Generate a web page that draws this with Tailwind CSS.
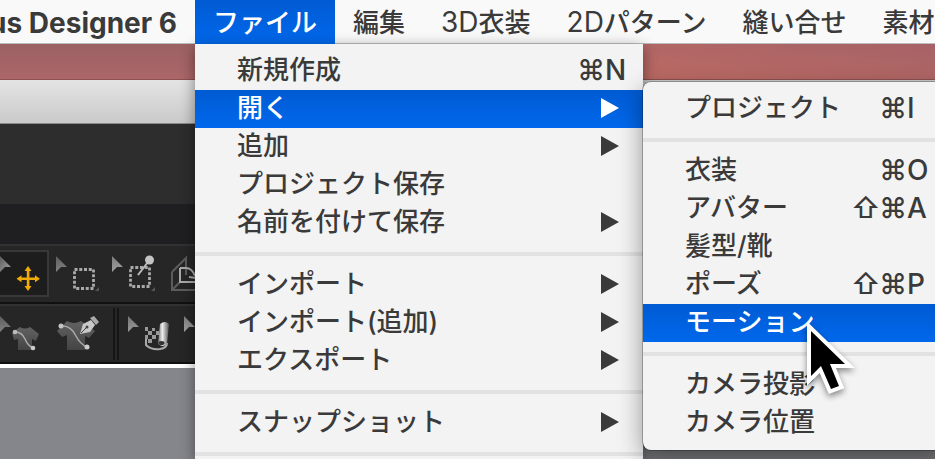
<!DOCTYPE html>
<html lang="ja">
<head>
  <meta charset="UTF-8">
  <meta name="viewport" content="width=device-width, initial-scale=1.0">
  <title>Designer 6</title>
  <script src="https://cdn.jsdelivr.net/npm/@tailwindcss/browser@4"></script>
</head>
<body class="relative flex h-screen flex-col overflow-hidden bg-[#85868b] font-['Inter','Noto_Sans_CJK_JP',sans-serif] text-[26px] leading-[38px] font-medium text-[#3a3a3a]">

  <!-- Menu bar -->
  <nav class="flex h-11 shrink-0 border-b border-[#bdbdbd] bg-[#f9f9f9] whitespace-nowrap">
    <div class="flex w-[195px] shrink-0 items-center justify-end overflow-hidden pt-0.5 pr-[18px] text-[28px] font-bold">us Designer 6</div>
    <button class="-mb-px h-11 shrink-0 bg-linear-to-b from-[#005bd3] to-[#0068ec] px-[18px] pt-0.5 text-white">ファイル</button>
    <button class="shrink-0 px-[18px] pt-0.5">編集</button>
    <button class="shrink-0 px-[18px] pt-0.5"><span class="text-[28px] font-normal">3D</span>衣装</button>
    <button class="shrink-0 px-[18px] pt-0.5"><span class="text-[28px] font-normal">2D</span>パターン</button>
    <button class="shrink-0 px-[18px] pt-0.5">縫い合せ</button>
    <button class="shrink-0 px-[18px] pt-0.5">素材</button>
  </nav>

  <!-- Desktop and application window -->
  <div class="h-9 shrink-0 border-b border-[#8d5050] bg-linear-to-b from-[#9b6163] to-[#ad666a]"></div>
  <div class="h-11 shrink-0 border-b border-[#8a8a8a] bg-linear-to-b from-[#e4e4e4] to-[#cacaca]"></div>
  <div class="h-20 shrink-0 bg-[#2d2d2d]"></div>
  <div class="h-10 shrink-0 bg-[#1f1f21]"></div>
  <div class="h-[60px] shrink-0 border-t-2 border-b-2 border-t-[#323232] border-b-[#101010] bg-[#262626]">
    <svg width="200" height="56" viewBox="0 246 200 56">
      <defs>
        <linearGradient id="arrow" x1="0" y1="0" x2="1" y2="1">
          <stop offset="0" stop-color="#5c5c5c"/>
          <stop offset="1" stop-color="#a5a5a5"/>
        </linearGradient>
      </defs>
      <path d="M-2 251H48V296H-2z" fill="#1d1d1d" stroke="#383838" stroke-width="2"/>
      <path d="M0 256l11 11-6 0-5 5z" fill="url(#arrow)"/>
      <g fill="#f0ab06">
        <path d="M26.800 270h2.600v17h-2.600zM20 277.400h16v2.600H20z"/>
        <path d="M28 266l3.500 5h-7zM28 291l3.500-5h-7zM16.500 278.700l5-3.500v7zM40 278.700l-5-3.500v7z"/>
      </g>
      <path d="M56 256l11 11-6 0-5 5zM112 256l11 11-6 0-5 5z" fill="url(#arrow)"/>
      <path d="M74.500 269.500h19v19h-19z" fill="none" stroke="#aaa" stroke-width="2.800" stroke-dasharray="3 1.750"/>
      <path d="M130.500 267.500h19v19h-19z" fill="none" stroke="#aaa" stroke-width="2.800" stroke-dasharray="3 1.750"/>
      <path d="M138 275l10-13" stroke="#bbb" stroke-width="2"/>
      <circle cx="149.500" cy="260" r="4.500" fill="#c4c4c4"/>
      <path d="M99 287v4h-4zM155 287v4h-4z" fill="#555"/>
      <path d="M172 272l14-14v17M172 272v18h24M172 290l8-8" fill="none" stroke="#5c5c5c" stroke-width="2"/>
      <path d="M180 268v14h16M180 268h6q6 0 9 8M189 277l7 1" fill="none" stroke="#aaa" stroke-width="2"/>
    </svg>
  </div>
  <div class="h-[60px] shrink-0 border-t-2 border-b-2 border-t-[#323232] border-b-[#101010] bg-[#262626]">
    <svg width="200" height="56" viewBox="0 306 200 56">
      <defs>
        <linearGradient id="roll" x1="0" y1="0" x2="1" y2="0">
          <stop offset="0" stop-color="#777"/>
          <stop offset=".4" stop-color="#eee"/>
          <stop offset="1" stop-color="#555"/>
        </linearGradient>
        <linearGradient id="shirt" x1="0" y1="0" x2="0" y2="1">
          <stop offset="0" stop-color="#626262"/>
          <stop offset="1" stop-color="#444"/>
        </linearGradient>
      </defs>
      <path d="M0 316l11 11-6 0-5 5zM128 316l11 11-6 0-5 5zM184 316l11 11-6 0-5 5z" fill="url(#arrow)"/>
      <path d="M12 333l8-6q5 3 10 0l9 7-3 7-4-2v11H18v-11l-4 1z" fill="url(#shirt)"/>
      <path d="M15 332q7 0 10 7t8 9" fill="none" stroke="#aaa" stroke-width="1.500"/>
      <circle cx="15" cy="332" r="2.300" fill="#bbb"/>
      <circle cx="33" cy="348" r="2.300" fill="#ccc"/>
      <path d="M57 331l10-10q7 4 14 0l14 10-6 7-4-2v14H67v-15l-5 2z" fill="url(#shirt)"/>
      <path d="M61 326q10-1 15 10 4 8 11 11" fill="none" stroke="#aaa" stroke-width="1.500"/>
      <circle cx="61" cy="326" r="2.500" fill="#c5c5c5"/>
      <circle cx="87" cy="347" r="2.500" fill="#ccc"/>
      <path d="M80 334l3-10 8-4 4 5-5 7z" fill="#c8c8c8"/>
      <path d="M90 318l4-2 5 6-3 3z" fill="#aaa"/>
      <path d="M81 333l5-5" stroke="#444"/>
      <circle cx="87" cy="327" r="1.500" fill="#444"/>
      <path d="M114 308v52M118 308v52" stroke="#111" stroke-width="1.500"/>
      <path d="M145 327h3v4h-3zM148 331h4v4h-4zM145 335h3v4h-3zM152 328h3v3h-3zM152 335h4v4h-4zM148 339h4v4h-4zM156 331h3v4h-3z" fill="#999"/>
      <path d="M146 339v6q5 5 14 4 7-1 7-6" fill="none" stroke="#aaa" stroke-width="2"/>
      <path d="M160 324q5-4 9 0l-2 20q-4 4-9 0z" fill="url(#roll)"/>
      <ellipse cx="161.500" cy="343" rx="3" ry="2" fill="#333"/>
    </svg>
  </div>
  <div class="h-1 shrink-0 bg-white"></div>

  <!-- Desktop to the right of the file menu -->
  <div class="absolute top-11 right-0 bottom-0 left-[643px] flex flex-col">
    <div class="h-9 border-b border-[#8d5050] bg-linear-to-tr from-[#bd6b64] to-[#a56266]"></div>
    <div class="h-11 bg-[#cfcfcf]"></div>
    <div class="flex-1 bg-linear-to-b from-[#707174] to-[#77787b]"></div>
  </div>

  <!-- File menu -->
  <div class="absolute top-11 bottom-0 left-[195px] w-[448px] overflow-hidden bg-[#f3f3f3] pt-2 whitespace-nowrap shadow-[0_4px_14px_rgba(0,0,0,0.45)]">
    <button class="flex h-[38px] w-full items-center pb-0.5 pl-[42px] text-left">新規作成<span class="ml-auto w-7 text-center text-[28px]">⌘</span><span class="w-[38px] text-[28px]">N</span></button>
    <button class="flex h-[38px] w-full items-center justify-between bg-linear-to-b from-[#005bd3] to-[#0068ec] pr-6 pb-0.5 pl-[42px] text-left text-white">開く<svg width="18" height="20" fill="currentColor"><path d="M0 0l18 10L0 20z"/></svg></button>
    <button class="flex h-[38px] w-full items-center justify-between pr-6 pb-0.5 pl-[42px] text-left">追加<svg width="18" height="20" fill="currentColor"><path d="M0 0l18 10L0 20z"/></svg></button>
    <button class="flex h-[38px] w-full items-center pb-0.5 pl-[42px] text-left">プロジェクト保存</button>
    <button class="flex h-[38px] w-full items-center justify-between pr-6 pb-0.5 pl-[42px] text-left">名前を付けて保存<svg width="18" height="20" fill="currentColor"><path d="M0 0l18 10L0 20z"/></svg></button>
    <hr class="my-[10px] border-t-4 border-[#e2e2e2]">
    <button class="flex h-[38px] w-full items-center justify-between pr-6 pb-0.5 pl-[42px] text-left">インポート<svg width="18" height="20" fill="currentColor"><path d="M0 0l18 10L0 20z"/></svg></button>
    <button class="flex h-[38px] w-full items-center justify-between pr-6 pb-0.5 pl-[42px] text-left">インポート(追加)<svg width="18" height="20" fill="currentColor"><path d="M0 0l18 10L0 20z"/></svg></button>
    <button class="flex h-[38px] w-full items-center justify-between pr-6 pb-0.5 pl-[42px] text-left">エクスポート<svg width="18" height="20" fill="currentColor"><path d="M0 0l18 10L0 20z"/></svg></button>
    <hr class="my-[10px] border-t-4 border-[#e2e2e2]">
    <button class="flex h-[38px] w-full items-center justify-between pr-6 pb-0.5 pl-[42px] text-left">スナップショット<svg width="18" height="20" fill="currentColor"><path d="M0 0l18 10L0 20z"/></svg></button>
    <hr class="my-[10px] border-t-4 border-[#e2e2e2]">
  </div>

  <!-- Open submenu -->
  <div class="absolute top-[82px] -right-3 left-[643px] rounded-lg bg-[#f3f3f3] py-2 whitespace-nowrap shadow-[0_0_0_1px_rgba(0,0,0,0.25),0_8px_24px_rgba(0,0,0,0.4)]">
    <button class="flex h-[38px] w-full items-center pb-0.5 pl-[42px] text-left">プロジェクト<span class="ml-auto w-7 text-center text-[28px]">⌘</span><span class="w-10 text-[28px]">I</span></button>
    <hr class="my-[10px] border-t-4 border-[#e2e2e2]">
    <button class="flex h-[38px] w-full items-center pb-0.5 pl-[42px] text-left">衣装<span class="ml-auto w-7 text-center text-[28px]">⌘</span><span class="w-10 text-[28px]">O</span></button>
    <button class="flex h-[38px] w-full items-center pb-0.5 pl-[42px] text-left">アバター<span class="ml-auto w-7 text-center text-[28px]">⇧</span><span class="w-7 text-center text-[28px]">⌘</span><span class="w-10 text-[28px]">A</span></button>
    <button class="flex h-[38px] w-full items-center pb-0.5 pl-[42px] text-left">髪型/靴</button>
    <button class="flex h-[38px] w-full items-center pb-0.5 pl-[42px] text-left">ポーズ<span class="ml-auto w-7 text-center text-[28px]">⇧</span><span class="w-7 text-center text-[28px]">⌘</span><span class="w-10 text-[28px]">P</span></button>
    <button class="flex h-[38px] w-full items-center bg-linear-to-b from-[#005bd3] to-[#0068ec] pb-0.5 pl-[42px] text-left text-white">モーション</button>
    <hr class="my-[10px] border-t-4 border-[#e2e2e2]">
    <button class="flex h-[38px] w-full items-center pb-0.5 pl-[42px] text-left">カメラ投影</button>
    <button class="flex h-[38px] w-full items-center pb-0.5 pl-[42px] text-left">カメラ位置</button>
  </div>

  <!-- Mouse pointer -->
  <svg class="absolute top-[318px] left-[802px] drop-shadow-[0_3px_3px_rgba(0,0,0,0.45)]" width="60" height="86" viewBox="802 318 60 86">
    <path d="M811 331V376L821 366L831 389L839 386L830 364H845Z" fill="#000" stroke="#fff" stroke-width="8" paint-order="stroke"/>
  </svg>
</body>
</html>
